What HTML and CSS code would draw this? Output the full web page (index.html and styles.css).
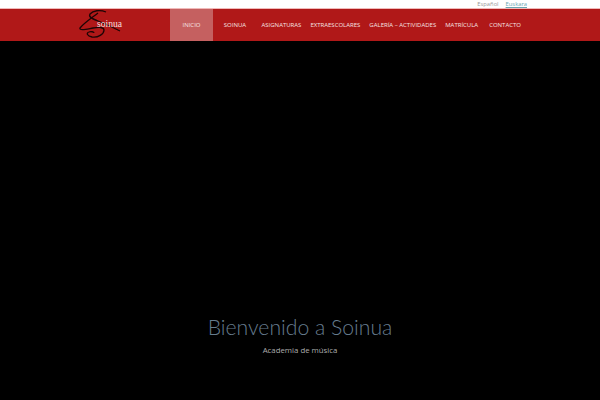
FILE: index.html
```html
<!DOCTYPE html>
<html lang="es">
<head>
<meta charset="utf-8">
<title>Soinua</title>
<link rel="stylesheet" href="styles.css">
</head>
<body>
<div class="langbar">
  <a class="lang" href="#">Español</a>
  <a class="lang active" href="#">Euskara</a>
</div>
<header class="header">
  <a class="logo" href="#">
    <svg class="logo-mark" width="44" height="32" viewBox="0 0 44 32" fill="none">
      <path d="M27 3C21 .5 14 1.500 11 5C9 8 14 10 19 12C27 15 35 19 41 22" stroke="#1c0505" stroke-width="1.300"/>
      <path d="M19 4C14 8 5 14 1 19C0 22 8 20 14 19C20 18 25 18 25 21C25 25 19 29 13 28C8 27 7 24 10 23C12 22 15 23 15 24" stroke="#1c0505" stroke-width="1.300"/>
    </svg>
    <span class="logo-text">soinua</span>
  </a>
  <nav class="nav">
    <a class="nav-item current" href="#">INICIO</a>
    <a class="nav-item w-soinua" href="#">SOINUA</a>
    <a class="nav-item" href="#">ASIGNATURAS</a>
    <a class="nav-item" href="#">EXTRAESCOLARES</a>
    <a class="nav-item" href="#">GALERÍA – ACTIVIDADES</a>
    <a class="nav-item" href="#">MATRÍCULA</a>
    <a class="nav-item" href="#">CONTACTO</a>
  </nav>
</header>
<main class="hero">
  <h1 class="hero-title">Bienvenido a Soinua</h1>
  <p class="hero-sub">Academia de música</p>
</main>
</body>
</html>
```
FILE: styles.css
```css
* { box-sizing: border-box; }
html, body { margin: 0; height: 100%; }
body {
  width: 600px;
  height: 400px;
  overflow: hidden;
  display: flex;
  flex-direction: column;
  background: #000;
  font-family: "Open Sans", sans-serif;
}
.langbar {
  height: 9px;
  background: #fff;
  border-bottom: 1px solid #f0b9b9;
  display: flex;
  justify-content: flex-end;
  gap: 7px;
  padding-right: 73px;
  font-size: 5.8px;
  line-height: 8px;
  overflow: hidden;
}
.lang { color: #9a9a9a; text-decoration: none; }
.lang.active { color: #6aa6b2; text-decoration: underline; }
.header {
  height: 32px;
  background: #b01818;
  display: flex;
  padding-left: 79px;
}
.logo {
  width: 91px;
  display: flex;
  align-items: flex-start;
  position: relative;
  text-decoration: none;
}
.logo-mark { flex: none; }
.logo-text {
  position: absolute;
  left: 18px;
  top: 9px;
  font-family: "Liberation Serif", serif;
  font-size: 9.6px;
  line-height: 12px;
  color: #f3dede;
}
.nav { display: flex; }
.nav-item {
  display: flex;
  align-items: center;
  justify-content: center;
  padding: 0 4.5px;
  font-size: 6px;
  color: #f6e3e3;
  text-decoration: none;
  white-space: nowrap;
}
.nav-item:last-child { margin-left: 2px; }
.nav-item.current {
  width: 43px;
  background: #c56060;
}
.nav-item.w-soinua { width: 44px; }
.hero {
  flex: 1;
  display: flex;
  flex-direction: column;
  align-items: center;
  padding-top: 272px;
}
.hero-title {
  margin: 0;
  font-family: Lato, sans-serif;
  font-weight: 300;
  font-size: 21.2px;
  line-height: 29px;
  color: #667c8e;
}
.hero-sub {
  margin: 2px 0 0;
  font-size: 7.8px;
  line-height: 12px;
  color: #adadad;
}
```
